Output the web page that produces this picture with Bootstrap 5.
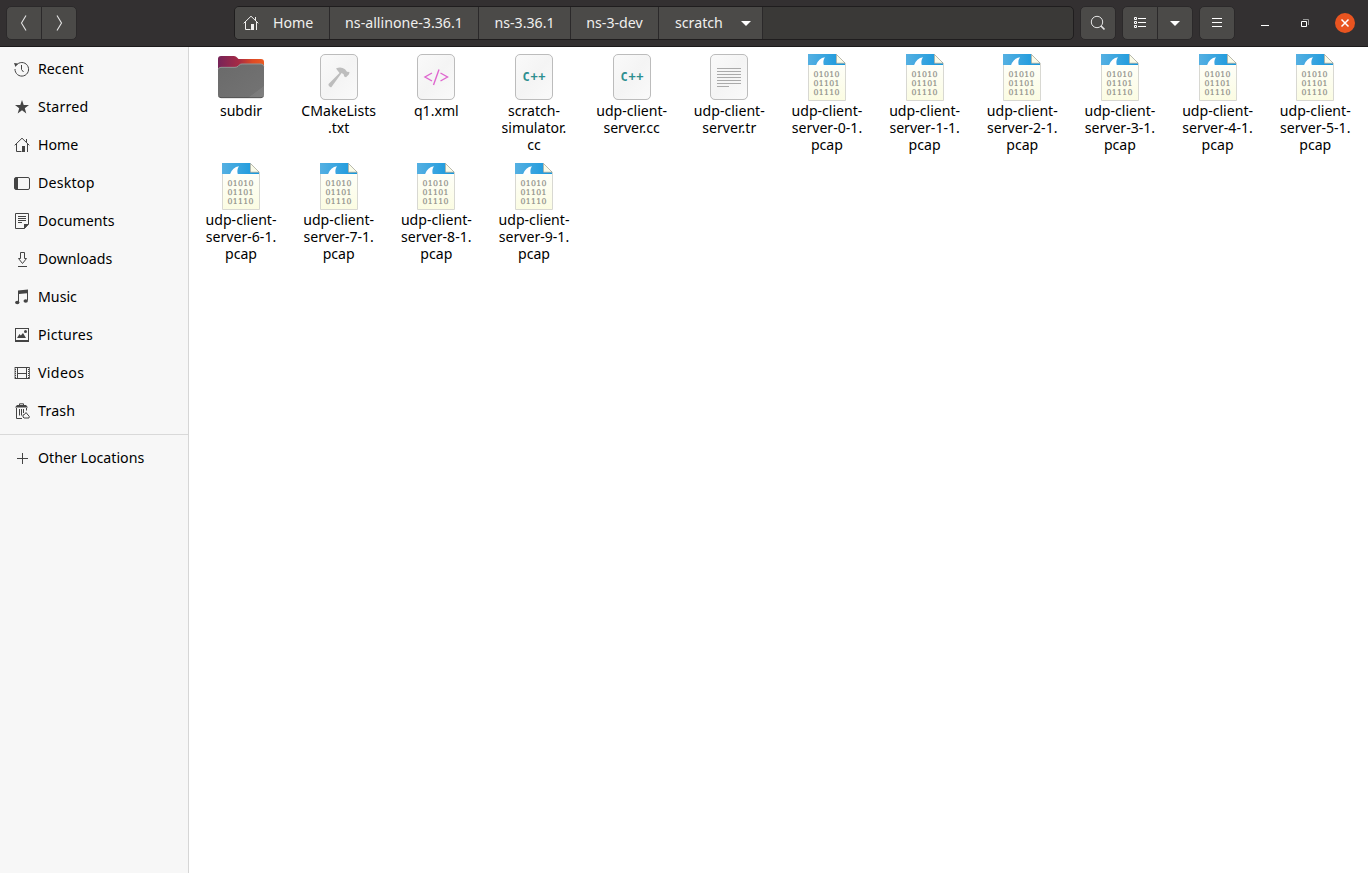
<!DOCTYPE html>
<html lang="en">
<head>
<meta charset="utf-8">
<meta name="viewport" content="width=device-width, initial-scale=1">
<title>scratch</title>
<link href="https://cdn.jsdelivr.net/npm/bootstrap@5.3.0/dist/css/bootstrap.min.css" rel="stylesheet">
<style>
  body { font-family: "Noto Sans", "Open Sans", sans-serif; font-size: 14.2px; line-height: 17px; color: #000; background: #fff; overflow: hidden; }
  svg { display: block; flex: none; }
  .titlebar { height: 47px; background: #333031; border-bottom: 1px solid #1c1a1b; color: #f0efee; padding: 6px 12px 6px 6px; }
  .titlebar .btn { --bs-btn-color: #e4e4e4; --bs-btn-bg: #4b4a48; --bs-btn-border-color: #2b292a; --bs-btn-hover-bg: #555452; --bs-btn-hover-color: #fff; --bs-btn-border-radius: 5px;
    width: 36px; height: 34px; padding: 0; display: flex; align-items: center; justify-content: center; }
  .pathbar { width: 840px; height: 34px; margin-left: 157px; background: #3a3937; border: 1px solid #1f1d1e; border-radius: 5px; overflow: hidden; }
  .crumb { background: #4b4a48; border-right: 1px solid #2b292a; height: 32px; padding-bottom: 2px; color: inherit; text-decoration: none; white-space: nowrap; }
  .crumb svg, .place svg { margin-top: 2px; }
  .sidebar { width: 189px; background: #f7f7f7; border-right: 1px solid #d6d6d6; padding-top: 3px; }
  .place { height: 38px; padding: 0 14px 2px; gap: 8px; color: #000; white-space: nowrap; text-decoration: none; }
  .place svg { color: #444; }
  .divider { height: 1px; background: #d9d9d9; margin: 4px 0; }
  .files { display: grid; grid-template-columns: repeat(12, 97.66px); grid-auto-rows: 109px; padding: 6px 0 0 3.2px; align-content: start; }
  .file { text-align: center; white-space: nowrap; font-size: 14.1px; }
  .file svg { margin: 0 auto 1px; }
</style>
</head>
<body class="vh-100 d-flex flex-column">

<svg width="0" height="0" class="position-absolute">
  <defs>
    <linearGradient id="gPaper" x1="0" y1="0" x2="1" y2="1"><stop offset="0" stop-color="#fafafa"/><stop offset=".5" stop-color="#f4f4f4"/><stop offset="1" stop-color="#fafafa"/></linearGradient>
    <linearGradient id="gBack" x1="0" x2="1"><stop offset="0" stop-color="#762459"/><stop offset=".45" stop-color="#a62a45"/><stop offset=".75" stop-color="#dd4a25"/><stop offset="1" stop-color="#ea5a22"/></linearGradient>
    <linearGradient id="gFront" x1="0" y1="0" x2="1" y2="1"><stop offset="0" stop-color="#6a6a6a"/><stop offset=".82" stop-color="#727272"/><stop offset=".83" stop-color="#7b7b7b"/><stop offset="1" stop-color="#808080"/></linearGradient>
    <linearGradient id="gFin" x1="0" x2="1"><stop offset="0" stop-color="#55b0e2"/><stop offset="1" stop-color="#1597dc"/></linearGradient>
    <linearGradient id="gCream" x1="0" y1="0" x2="0" y2="1"><stop offset="0" stop-color="#fff"/><stop offset="1" stop-color="#fbfce2"/></linearGradient>

    <symbol id="i-home" viewBox="0 0 16 16"><path d="M.7 8.300 8 1.200l7.300 7.100M12.500 2v3.500M2.500 7v7.500h5M13.500 7v8" fill="none" stroke="currentColor"/><path d="M8 9h3v6H8z" fill="currentColor"/></symbol>
    <symbol id="f-folder" viewBox="0 0 48 48">
      <path d="M1 38V6q0-3 3-3h13q2 0 3 1.500L21.500 6H44q3 0 3 3v29z" fill="url(#gBack)"/>
      <path d="M1 17q0-3 3-3h14q2 0 3-1l1.200-1.200Q23.200 10.700 25 10.700h19q3 0 3 3V42q0 3-3 3H4q-3 0-3-3z" fill="url(#gFront)"/>
      <path d="M1.200 16.500Q1.500 14.300 4 14.300h14q2 0 3-1l1.200-1.200q1-1.100 2.800-1.100h19q2.500 0 2.800 2.400" fill="none" stroke="#a5a5a5" stroke-width=".7"/>
      <path d="M2 43.500q.8 1.200 2 1.200h40q1.300 0 2-1.200" fill="none" stroke="#494949" stroke-width=".8"/>
    </symbol>
    <symbol id="f-paper" viewBox="0 0 48 48"><rect x="5.500" y="2" width="37" height="45" rx="4.500" fill="#ccc" opacity=".5"/><rect x="5.500" y="1.500" width="37" height="45" rx="4.500" fill="url(#gPaper)" stroke="#bcbcbc"/></symbol>
    <symbol id="f-make" viewBox="0 0 48 48"><use href="#f-paper"/><path d="m13.500 31 11-11-3.500-4.500q5-2.200 9 .8l2 2.500 2.500.2-.5 2.200-3 3-1.800-.7-.6-2.300-2-1.300L16.500 34q-1 .8-2-.5-1.500-1.200-1-2.500z" fill="#bdbdbd"/></symbol>
    <symbol id="f-xml" viewBox="0 0 48 48"><use href="#f-paper"/><path d="m20 20-7 4 7 4M28.500 20l7 4-7 4M27 16.500l-5.500 15.500" fill="none" stroke="#df66cf" stroke-width="1.400"/></symbol>
    <symbol id="f-cpp" viewBox="0 0 48 48"><use href="#f-paper"/><text x="12.500" y="28" font-family="DejaVu Sans Mono, monospace" font-weight="700" font-size="12" textLength="23" fill="#2d8f90">C++</text></symbol>
    <symbol id="f-text" viewBox="0 0 48 48"><use href="#f-paper"/><path d="M12 15.500h24M12 18.500h24M12 21.500h24M12 24.500h24M12 27.500h24M12 30.500h24M12 33.500h12" stroke="#aaa"/></symbol>
    <symbol id="f-pcap" viewBox="0 0 48 48">
      <path d="M5.500 1.500h28l9 9v37h-37z" fill="url(#gCream)" stroke="#d8d8d2"/>
      <path d="M5 1h28.500v8.500h8.500V12H5z" fill="url(#gFin)"/>
      <path d="M13 12.200Q15.500 5 22 4.200q-2.500 3.500-1.200 8z" fill="#fff"/>
      <path d="M33 .5h11V10z" fill="#fff"/>
      <path d="M33.500 1.500l8.700 8.700h-8.700z" fill="#fafbe8" stroke="#a5a598" stroke-width=".7"/>
      <g font-family="DejaVu Serif, serif" font-size="7.800" fill="#90908a" stroke="#90908a" stroke-width=".2"><text x="10.500" y="24" textLength="26">01010</text><text x="10.500" y="33" textLength="26">01101</text><text x="10.500" y="42" textLength="26">01110</text></g>
    </symbol>
  </defs>
</svg>

<header class="titlebar d-flex align-items-start flex-shrink-0">
  <div class="btn-group">
    <button class="btn" aria-label="Back"><svg width="16" height="16" fill="none" stroke="currentColor" stroke-width="1.100"><path d="M10 .5 5.500 8l4.500 7.500"/></svg></button>
    <button class="btn" aria-label="Forward"><svg width="16" height="16" fill="none" stroke="currentColor" stroke-width="1.100"><path d="M6 .5 10.500 8 6 15.500"/></svg></button>
  </div>
  <nav class="pathbar d-flex" aria-label="Path">
    <a href="#" class="crumb d-flex align-items-center" style="width:95px;padding-left:8px;gap:14px"><svg width="16" height="16"><use href="#i-home"/></svg><span>Home</span></a>
    <a href="#" class="crumb d-flex align-items-center justify-content-center" style="width:149px">ns-allinone-3.36.1</a>
    <a href="#" class="crumb d-flex align-items-center justify-content-center" style="width:92px">ns-3.36.1</a>
    <a href="#" class="crumb d-flex align-items-center justify-content-center" style="width:88px">ns-3-dev</a>
    <a href="#" class="crumb d-flex align-items-center justify-content-between" style="width:104px;padding-left:16px;padding-right:11px"><span>scratch</span><svg width="10" height="5"><path d="M0 0h10L5 5z" fill="#fff"/></svg></a>
  </nav>
  <button class="btn" style="margin-left:6px" aria-label="Search"><svg width="16" height="16" fill="none" stroke="currentColor"><circle cx="7" cy="7" r="5.700"/><path d="m11 11 3.500 3.500" stroke-width="1.700"/></svg></button>
  <div class="btn-group" style="margin-left:6px">
    <button class="btn" aria-label="List view"><svg width="14" height="12" fill="none" stroke="#fff"><path d="M1.500.5h2v2h-2zM1.500 4.500h2v2h-2zM1.500 8.500h2v2h-2zM5 1.500h8M5 5.500h8M5 9.500h8"/></svg></button>
    <button class="btn" aria-label="View options"><svg width="10" height="5"><path d="M0 0h10L5 5z" fill="#fff"/></svg></button>
  </div>
  <button class="btn" style="margin-left:6px" aria-label="Menu"><svg width="12" height="10" stroke="#fff"><path d="M1 .5h10M1 4.500h10M1 8.500h10"/></svg></button>
  <div class="d-flex align-items-center h-100 ms-auto" style="gap:24px">
    <svg width="16" height="16"><path d="M4 10.500h8" stroke="#fff"/></svg>
    <svg width="16" height="16" fill="none"><path d="M6 4.500h5.500V10" stroke="#999"/><path d="M4.500 6.500h5v5h-5z" stroke="#fff"/></svg>
    <svg width="20" height="20" style="margin-left:-2px;margin-right:1px"><circle cx="10" cy="10" r="10" fill="#e95420"/><path d="m6.500 6.500 7 7m0-7-7 7" stroke="#fff" stroke-width="1.500"/></svg>
  </div>
</header>

<div class="d-flex flex-grow-1">
  <aside class="sidebar flex-shrink-0">
    <a href="#" class="place d-flex align-items-center"><svg width="16" height="16" fill="none" stroke="currentColor"><path d="M2.300 4.300A6.800 6.800 0 1 1 1 8"/><path d="M0 2l4 .5L1.500 6z" fill="currentColor" stroke="none"/><path d="M7.500 4v4.500l2 2.500"/></svg>Recent</a>
    <a href="#" class="place d-flex align-items-center"><svg width="16" height="16" fill="currentColor"><path d="m8 1 1.700 5H15l-4.200 3.200L12.300 14.500 8 11.300l-4.300 3.200 1.500-5.300L1 6h5.300z"/></svg><span style="letter-spacing:.2px">Starred</span></a>
    <a href="#" class="place d-flex align-items-center"><svg width="16" height="16"><use href="#i-home"/></svg>Home</a>
    <a href="#" class="place d-flex align-items-center"><svg width="16" height="16"><rect x=".5" y="2.500" width="15" height="12" rx="1.500" fill="none" stroke="currentColor"/><path d="M1 3h3v11H1z" fill="currentColor"/></svg><span style="letter-spacing:.2px">Desktop</span></a>
    <a href="#" class="place d-flex align-items-center"><svg width="16" height="16" fill="none" stroke="currentColor"><path d="M1.500.5h13V11l-4 4.500h-9zM4 3.500h8M4 5.500h8M4 7.500h8M4 9.500h4"/><path d="M10 11h5l-5 5z" fill="currentColor" stroke="none"/></svg>Documents</a>
    <a href="#" class="place d-flex align-items-center"><svg width="16" height="16" fill="none" stroke="currentColor"><path d="M6.500 1.500h4v6h2l-4 5-4-5h2zM4 15.500h9"/></svg>Downloads</a>
    <a href="#" class="place d-flex align-items-center"><svg width="16" height="16" fill="currentColor"><path d="M4 1.500 14 .5v11h-1V4.200L5 5v8H4z"/><ellipse cx="3.300" cy="13.500" rx="2.200" ry="1.800"/><ellipse cx="11.700" cy="12" rx="2.200" ry="1.800"/></svg>Music</a>
    <a href="#" class="place d-flex align-items-center"><svg width="16" height="16" fill="currentColor"><path fill-rule="evenodd" d="M1 1h14v14H1zm1 1v11h12V2z"/><path d="M3 11l2.500-4 1.300 1.500L9 6l3 5z"/><circle cx="11.500" cy="4.500" r="1.500"/></svg><span style="letter-spacing:.2px">Pictures</span></a>
    <a href="#" class="place d-flex align-items-center"><svg width="17" height="16" fill="none" stroke="currentColor" style="margin-right:-1px"><path d="M3.500 2v12M12.500 2v12M3 2.500h10M3 8.500h10M3 13.500h10"/><path d="M1.500 2v12M14.500 2v12" stroke-dasharray="1 1"/><path d="M1 2.500h3M1 13.500h3M12 2.500h3M12 13.500h3" /><path d="M1 2v12M15.500 2v12" stroke-width=".8"/></svg><span style="letter-spacing:.35px">Videos</span></a>
    <a href="#" class="place d-flex align-items-center"><svg width="16" height="16" fill="none" stroke="currentColor"><path d="M5.500 3V.8h4V3"/><path d="M1 4.500 3 2h9l2 2.500z" fill="currentColor" stroke="none"/><path d="M2.500 5v10.500H8M12.500 5v2.500M5.500 6v6.500M7.500 6v6.500M9.500 6v4"/><path d="M9 14q-.5-3 1.500-2.500L12 9.500l2 2.500q2 1 1 3H10z" fill="#f7f7f7"/></svg><span style="letter-spacing:.2px">Trash</span></a>
    <div class="divider"></div>
    <a href="#" class="place d-flex align-items-center"><svg width="16" height="16" stroke="currentColor"><path d="M3 8.500h11M8.500 3v11"/></svg>Other Locations</a>
  </aside>

  <main class="files flex-grow-1">
    <div class="file"><svg width="48" height="48"><use href="#f-folder"/></svg>subdir</div>
    <div class="file"><svg width="48" height="48"><use href="#f-make"/></svg>CMakeLists<br>.txt</div>
    <div class="file"><svg width="48" height="48"><use href="#f-xml"/></svg>q1.xml</div>
    <div class="file"><svg width="48" height="48"><use href="#f-cpp"/></svg>scratch-<br>simulator.<br>cc</div>
    <div class="file"><svg width="48" height="48"><use href="#f-cpp"/></svg>udp-client-<br>server.cc</div>
    <div class="file"><svg width="48" height="48"><use href="#f-text"/></svg>udp-client-<br>server.tr</div>
    <div class="file"><svg width="48" height="48"><use href="#f-pcap"/></svg>udp-client-<br>server-0-1.<br>pcap</div>
    <div class="file"><svg width="48" height="48"><use href="#f-pcap"/></svg>udp-client-<br>server-1-1.<br>pcap</div>
    <div class="file"><svg width="48" height="48"><use href="#f-pcap"/></svg>udp-client-<br>server-2-1.<br>pcap</div>
    <div class="file"><svg width="48" height="48"><use href="#f-pcap"/></svg>udp-client-<br>server-3-1.<br>pcap</div>
    <div class="file"><svg width="48" height="48"><use href="#f-pcap"/></svg>udp-client-<br>server-4-1.<br>pcap</div>
    <div class="file"><svg width="48" height="48"><use href="#f-pcap"/></svg>udp-client-<br>server-5-1.<br>pcap</div>
    <div class="file"><svg width="48" height="48"><use href="#f-pcap"/></svg>udp-client-<br>server-6-1.<br>pcap</div>
    <div class="file"><svg width="48" height="48"><use href="#f-pcap"/></svg>udp-client-<br>server-7-1.<br>pcap</div>
    <div class="file"><svg width="48" height="48"><use href="#f-pcap"/></svg>udp-client-<br>server-8-1.<br>pcap</div>
    <div class="file"><svg width="48" height="48"><use href="#f-pcap"/></svg>udp-client-<br>server-9-1.<br>pcap</div>
  </main>
</div>

<script src="https://cdn.jsdelivr.net/npm/bootstrap@5.3.0/dist/js/bootstrap.bundle.min.js"></script>
</body>
</html>
